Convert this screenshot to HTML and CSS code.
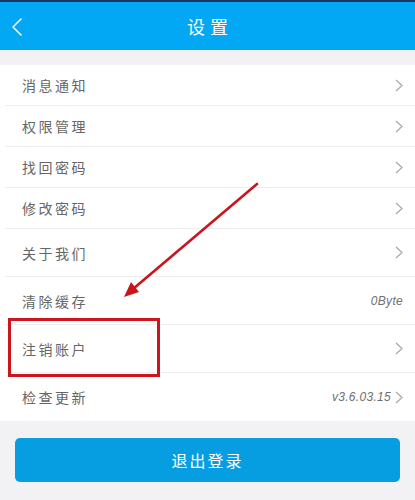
FILE: index.html
```html
<!DOCTYPE html>
<html lang="zh">
<head>
<meta charset="utf-8">
<title>设置</title>
<link rel="stylesheet" href="styles.css">
</head>
<body>
<div class="page">
  <header class="topbar">
    <svg class="back" width="12" height="18" viewBox="0 0 12 18"><path d="M10 1 L2 9 L10 17" fill="none" stroke="#fff" stroke-width="1.5" stroke-linecap="round" stroke-linejoin="round"/></svg>
    <h1 class="title">设置</h1>
  </header>
  <div class="gap"></div>
  <ul class="list">
    <li class="row r-s"><span class="label">消息通知</span><span class="right"><svg class="chev" width="8" height="13" viewBox="0 0 8 13"><path d="M1 1 L7 6.5 L1 12" fill="none" stroke="#a8a8a8" stroke-width="1.2"/></svg></span></li>
    <li class="row r-s"><span class="label">权限管理</span><span class="right"><svg class="chev" width="8" height="13" viewBox="0 0 8 13"><path d="M1 1 L7 6.5 L1 12" fill="none" stroke="#a8a8a8" stroke-width="1.2"/></svg></span></li>
    <li class="row r-s"><span class="label">找回密码</span><span class="right"><svg class="chev" width="8" height="13" viewBox="0 0 8 13"><path d="M1 1 L7 6.5 L1 12" fill="none" stroke="#a8a8a8" stroke-width="1.2"/></svg></span></li>
    <li class="row r-s"><span class="label">修改密码</span><span class="right"><svg class="chev" width="8" height="13" viewBox="0 0 8 13"><path d="M1 1 L7 6.5 L1 12" fill="none" stroke="#a8a8a8" stroke-width="1.2"/></svg></span></li>
    <li class="row r-l"><span class="label">关于我们</span><span class="right"><svg class="chev" width="8" height="13" viewBox="0 0 8 13"><path d="M1 1 L7 6.5 L1 12" fill="none" stroke="#a8a8a8" stroke-width="1.2"/></svg></span></li>
    <li class="row r-l"><span class="label">清除缓存</span><span class="right"><span class="value">0Byte</span></span></li>
    <li class="row r-l"><span class="label">注销账户</span><span class="right"><svg class="chev" width="8" height="13" viewBox="0 0 8 13"><path d="M1 1 L7 6.5 L1 12" fill="none" stroke="#a8a8a8" stroke-width="1.2"/></svg></span></li>
    <li class="row r-l last"><span class="label">检查更新</span><span class="right"><span class="value">v3.6.03.15</span><svg class="chev" width="8" height="13" viewBox="0 0 8 13"><path d="M1 1 L7 6.5 L1 12" fill="none" stroke="#a8a8a8" stroke-width="1.2"/></svg></span></li>
  </ul>
  <div class="footer">
    <button class="logout">退出登录</button>
  </div>
  <div class="mark-box"></div>
  <svg class="mark-arrow" width="415" height="500" viewBox="0 0 415 500">
    <line x1="257" y1="184" x2="133" y2="289" stroke="#c9151d" stroke-width="2.6" stroke-linecap="round"/>
    <polygon points="124,297 131,282 139,292" fill="#c9151d"/>
  </svg>
</div>
</body>
</html>
```
FILE: styles.css
```css
* { box-sizing: border-box; }
html, body { margin: 0; padding: 0; }
body {
  background: #f2f2f4;
  font-family: "Noto Sans CJK SC", "Noto Sans", sans-serif;
  width: 415px;
  height: 500px;
  overflow: hidden;
}
.page { position: relative; width: 415px; height: 500px; }
.topbar {
  height: 50px;
  background: #02a8f3;
  border-top: 2px solid #18386a;
  display: flex;
  align-items: center;
  justify-content: center;
  position: relative;
}
.back { position: absolute; left: 11px; top: 16px; }
.title {
  margin: 0;
  color: #fff;
  font-size: 18px;
  font-weight: normal;
  letter-spacing: 5px;
  margin-right: -5px;
}
.gap { height: 15px; }
.list {
  list-style: none;
  margin: 0;
  padding: 0;
  background: #fff;
}
.row {
  margin-left: 5px;
  padding-left: 17px;
  padding-right: 12px;
  border-bottom: 1px solid #efefef;
  display: flex;
  align-items: center;
  justify-content: space-between;
}
.row.last { border-bottom: none; }
.r-s { height: 41px; }
.r-l { height: 48px; }
.label {
  font-size: 14px;
  color: #666;
  letter-spacing: 2.5px;
}
.right { display: flex; align-items: center; gap: 4px; }
.chev { display: block; }
.value {
  font-family: "Liberation Sans", sans-serif;
  font-style: italic;
  font-size: 12px;
  color: #707070;
  letter-spacing: 0.3px;
}
.footer { padding: 17px 15px 0 15px; }
.logout {
  width: 100%;
  height: 44px;
  border: none;
  border-radius: 5px;
  background: #079ee1;
  color: #fff;
  font-family: "Noto Sans CJK SC", sans-serif;
  font-size: 16px;
  letter-spacing: 2px;
  padding: 0;
}
.mark-box {
  position: absolute;
  left: 8px;
  top: 318px;
  width: 152px;
  height: 59px;
  border: 3px solid #cc151d;
}
.mark-arrow { position: absolute; left: 0; top: 0; pointer-events: none; }
```
